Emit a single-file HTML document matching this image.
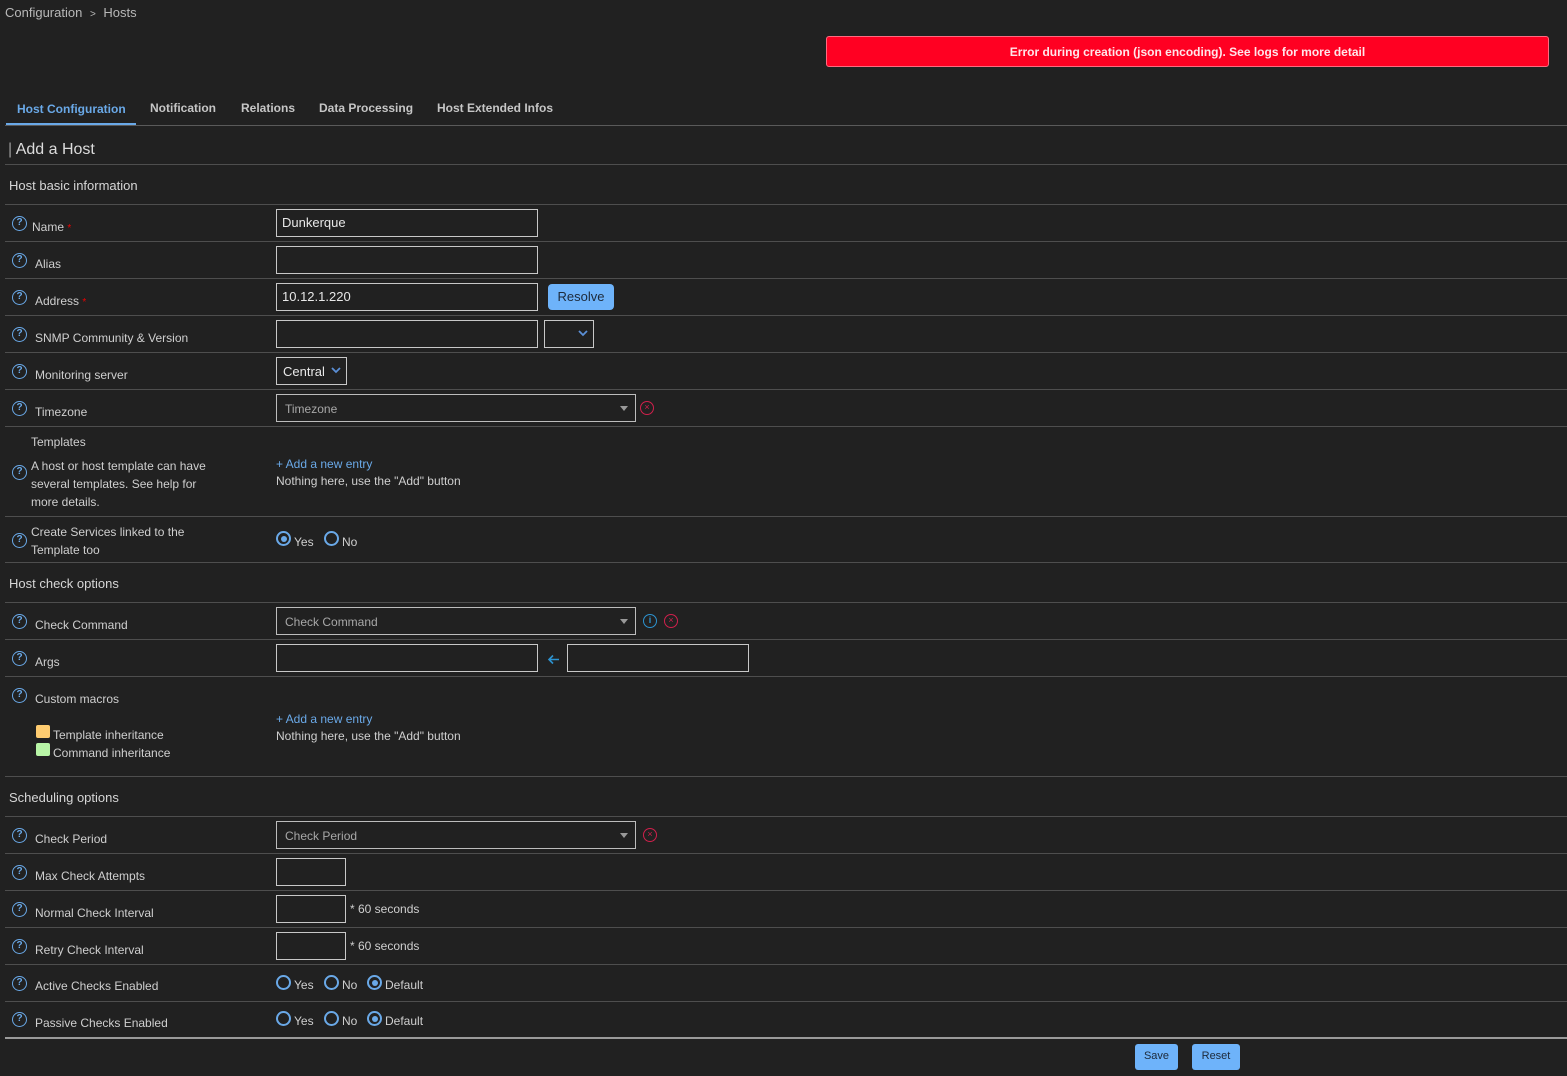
<!DOCTYPE html>
<html><head><meta charset="utf-8"><style>
*{box-sizing:border-box;margin:0;padding:0}
body{width:1567px;height:1076px;background:#212121;color:#cfcfcf;font-family:"Liberation Sans",sans-serif;font-size:12px;position:relative;overflow:hidden}
.a{position:absolute;white-space:nowrap}
.hl{position:absolute;left:5px;right:0;height:1px;background:#4e4e4e}
.hi{position:absolute;left:12px;width:15px;height:15px;border:1.5px solid #6aa9e8;border-radius:50%;color:#6aa9e8;font-size:10px;line-height:12px;text-align:center;font-weight:bold}
.lb{position:absolute;left:35px;font-size:12px;color:#cfcfcf}
.in{position:absolute;height:28px;border:1px solid #c8c8c8;background:#212121;font-size:13px;color:#e8e8e8;padding:6px 0 0 5px}
.sel{position:absolute;left:276px;width:360px;height:28px;border:1px solid #bdbdbd;color:#a8a8a8;font-size:12px;padding:7px 0 0 8px}
.sel:after{content:"";position:absolute;right:7px;top:11px;border-left:4px solid transparent;border-right:4px solid transparent;border-top:5px solid #999}
.x{position:absolute;width:14px;height:14px;border:1.5px solid #d0204c;border-radius:50%;color:#d0204c;font-size:9px;line-height:10px;text-align:center}
.rd{position:absolute;width:15px;height:15px;border:2px solid #6aa9e8;border-radius:50%}
.rd.on:after{content:"";position:absolute;left:2.5px;top:2.5px;width:6px;height:6px;border-radius:50%;background:#6aa9e8}
.rt{position:absolute;font-size:12px;color:#cfcfcf}
.sec{position:absolute;left:9px;font-size:13px;color:#d6d6d6}
.link{color:#6aa9e8}
.btn{position:absolute;background:#6eb3fa;color:#1d2a3a;border-radius:3px;font-size:11px;text-align:center;line-height:25px}
.chev{position:absolute}
</style></head><body>

<div class="a" style="left:5px;top:5px;font-size:13px;color:#b8b8b8">Configuration <span style="font-size:10px;margin:0 4px">&gt;</span> Hosts</div>

<div class="a" style="left:826px;top:36px;width:723px;height:31px;background:#ff0022;border:1px solid #ff6a80;border-radius:3px;color:#ffe6ea;font-weight:bold;font-size:12px;text-align:center;line-height:30px">Error during creation (json encoding). See logs for more detail</div>

<div class="a" style="left:17px;top:102px;font-weight:bold;color:#6aa9e8">Host Configuration</div>
<div class="a" style="left:150px;top:101px;font-weight:bold;color:#c6c6c6">Notification</div>
<div class="a" style="left:241px;top:101px;font-weight:bold;color:#c6c6c6">Relations</div>
<div class="a" style="left:319px;top:101px;font-weight:bold;color:#c6c6c6">Data Processing</div>
<div class="a" style="left:437px;top:101px;font-weight:bold;color:#c6c6c6">Host Extended Infos</div>
<div class="hl" style="top:125px;background:#5a5a5a"></div>
<div class="a" style="left:6px;top:123px;width:130px;height:2px;background:#6aa9e8"></div>

<div class="a" style="left:8px;top:141px;font-size:16px;color:#dcdcdc"><span style="color:#999">|</span> Add a Host</div>
<div class="hl" style="top:164px"></div>
<div class="sec" style="top:178px">Host basic information</div>
<div class="hl" style="top:204px"></div>

<div class="hi" style="top:216px">?</div><div class="lb" style="left:32px;top:220px">Name <span style="color:#e00;font-size:10px">*</span></div>
<div class="in" style="left:276px;top:209px;width:262px;padding-top:5px">Dunkerque</div>
<div class="hl" style="top:241px"></div>
<div class="hi" style="top:253px">?</div><div class="lb" style="top:257px">Alias</div>
<div class="in" style="left:276px;top:246px;width:262px"></div>
<div class="hl" style="top:278px"></div>
<div class="hi" style="top:290px">?</div><div class="lb" style="top:294px">Address <span style="color:#e00;font-size:10px">*</span></div>
<div class="in" style="left:276px;top:283px;width:262px;padding-top:5px">10.12.1.220</div>
<div class="btn" style="left:548px;top:284px;width:66px;height:26px;font-size:13px;line-height:26px;border-radius:4px">Resolve</div>
<div class="hl" style="top:315px"></div>
<div class="hi" style="top:327px">?</div><div class="lb" style="top:331px">SNMP Community &amp; Version</div>
<div class="in" style="left:276px;top:320px;width:262px"></div>
<div class="in" style="left:544px;top:320px;width:50px"></div>
<svg class="chev" style="left:578px;top:329px" width="10" height="8"><path d="M1 2 L5 6 L9 2" stroke="#5b8fd6" stroke-width="1.8" fill="none"/></svg>
<div class="hl" style="top:352px"></div>
<div class="hi" style="top:364px">?</div><div class="lb" style="top:368px">Monitoring server</div>
<div class="in" style="left:276px;top:357px;width:71px;padding-left:6px">Central</div>
<svg class="chev" style="left:331px;top:366px" width="10" height="8"><path d="M1 2 L5 6 L9 2" stroke="#5b8fd6" stroke-width="1.8" fill="none"/></svg>
<div class="hl" style="top:389px"></div>
<div class="hi" style="top:401px">?</div><div class="lb" style="top:405px">Timezone</div>
<div class="sel" style="top:394px">Timezone</div>
<div class="x" style="left:640px;top:401px">×</div>
<div class="hl" style="top:426px"></div>
<div class="lb" style="left:31px;top:435px">Templates</div>
<div class="hi" style="top:465px">?</div>
<div class="lb" style="left:31px;top:457px;line-height:18px;white-space:normal;width:182px">A host or host template can have several templates. See help for more details.</div>
<div class="rt link" style="left:276px;top:457px">+ Add a new entry</div>
<div class="rt" style="left:276px;top:474px">Nothing here, use the "Add" button</div>
<div class="hl" style="top:516px"></div>
<div class="hi" style="top:533px">?</div>
<div class="lb" style="left:31px;top:523px;line-height:18px">Create Services linked to the<br>Template too</div>
<div class="rd on" style="left:276px;top:531px"></div><div class="rt" style="left:294px;top:535px">Yes</div>
<div class="rd" style="left:324px;top:531px"></div><div class="rt" style="left:342px;top:535px">No</div>
<div class="hl" style="top:562px"></div>
<div class="sec" style="top:576px">Host check options</div>
<div class="hl" style="top:602px"></div>
<div class="hi" style="top:614px">?</div><div class="lb" style="top:618px">Check Command</div>
<div class="sel" style="top:607px;width:360px">Check Command</div>
<div class="x" style="left:643px;top:614px;border-color:#2d93d0;color:#2d93d0;font-weight:bold">i</div>
<div class="x" style="left:664px;top:614px">×</div>
<div class="hl" style="top:639px"></div>
<div class="hi" style="top:651px">?</div><div class="lb" style="top:655px">Args</div>
<div class="in" style="left:276px;top:644px;width:262px"></div>
<svg class="chev" style="left:547px;top:654px" width="13" height="11"><path d="M12 5.5 H2 M6 1.5 L2 5.5 L6 9.5" stroke="#2d93d0" stroke-width="1.6" fill="none"/></svg>
<div class="in" style="left:567px;top:644px;width:182px"></div>
<div class="hl" style="top:676px"></div>
<div class="hi" style="top:688px">?</div><div class="lb" style="top:692px">Custom macros</div>
<div class="a" style="left:36px;top:725px;width:14px;height:13px;background:#ffcc70;border-radius:2px"></div>
<div class="lb" style="left:53px;top:728px">Template inheritance</div>
<div class="a" style="left:36px;top:743px;width:14px;height:13px;background:#b8f5a6;border-radius:2px"></div>
<div class="lb" style="left:53px;top:746px">Command inheritance</div>
<div class="rt link" style="left:276px;top:712px">+ Add a new entry</div>
<div class="rt" style="left:276px;top:729px">Nothing here, use the "Add" button</div>
<div class="hl" style="top:776px"></div>
<div class="sec" style="top:790px">Scheduling options</div>
<div class="hl" style="top:816px"></div>
<div class="hi" style="top:828px">?</div><div class="lb" style="top:832px">Check Period</div>
<div class="sel" style="top:821px">Check Period</div>
<div class="x" style="left:643px;top:828px">×</div>
<div class="hl" style="top:853px"></div>
<div class="hi" style="top:865px">?</div><div class="lb" style="top:869px">Max Check Attempts</div>
<div class="in" style="left:276px;top:858px;width:70px"></div>
<div class="hl" style="top:890px"></div>
<div class="hi" style="top:902px">?</div><div class="lb" style="top:906px">Normal Check Interval</div>
<div class="in" style="left:276px;top:895px;width:70px"></div>
<div class="rt" style="left:350px;top:902px">* 60 seconds</div>
<div class="hl" style="top:927px"></div>
<div class="hi" style="top:939px">?</div><div class="lb" style="top:943px">Retry Check Interval</div>
<div class="in" style="left:276px;top:932px;width:70px"></div>
<div class="rt" style="left:350px;top:939px">* 60 seconds</div>
<div class="hl" style="top:964px"></div>
<div class="hi" style="top:976px">?</div><div class="lb" style="top:979px">Active Checks Enabled</div>
<div class="rd" style="left:276px;top:975px"></div><div class="rt" style="left:294px;top:978px">Yes</div>
<div class="rd" style="left:324px;top:975px"></div><div class="rt" style="left:342px;top:978px">No</div>
<div class="rd on" style="left:367px;top:975px"></div><div class="rt" style="left:385px;top:978px">Default</div>
<div class="hl" style="top:1001px"></div>
<div class="hi" style="top:1012px">?</div><div class="lb" style="top:1016px">Passive Checks Enabled</div>
<div class="rd" style="left:276px;top:1011px"></div><div class="rt" style="left:294px;top:1014px">Yes</div>
<div class="rd" style="left:324px;top:1011px"></div><div class="rt" style="left:342px;top:1014px">No</div>
<div class="rd on" style="left:367px;top:1011px"></div><div class="rt" style="left:385px;top:1014px">Default</div>
<div class="hl" style="top:1037px;height:2px;background:#9a9a9a"></div>

<div class="btn" style="left:1135px;top:1044px;width:43px;height:26px">Save</div>
<div class="btn" style="left:1192px;top:1044px;width:48px;height:26px">Reset</div>
</body></html>
